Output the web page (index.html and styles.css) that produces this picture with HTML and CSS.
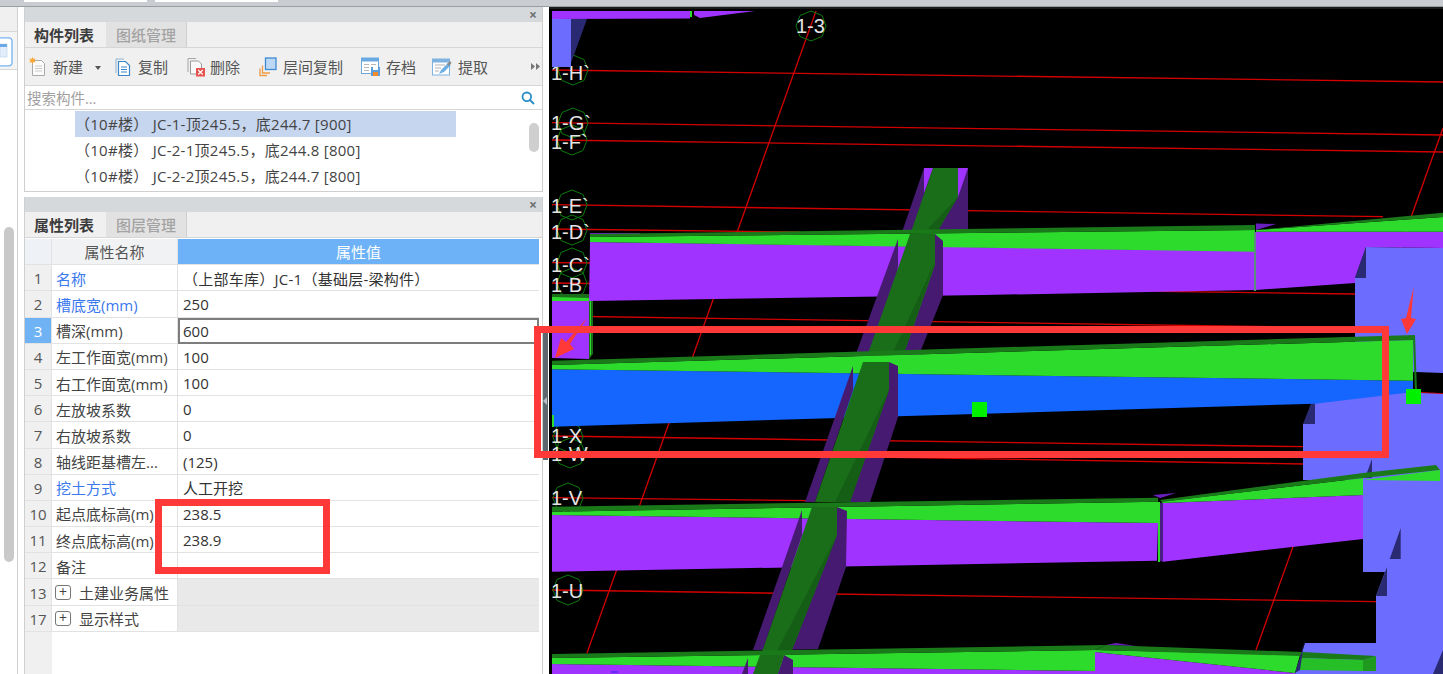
FILE: index.html
```html
<!DOCTYPE html>
<html lang="zh-CN">
<head>
<meta charset="utf-8">
<title>构件列表</title>
<link rel="stylesheet" href="styles.css">
</head>
<body>
<div class="top"><span class="top-tab"></span><span class="top-tab"></span></div>
<div class="main">
  <aside class="rail">
    <div class="rail-col">
      <div class="rail-head"></div>
      <div class="rail-icon">
        <svg class="rail-svg" width="13" height="30" viewBox="0 0 13 30"><path d="M-6 .8h15a3 3 0 0 1 3 3v22a3 3 0 0 1-3 3h-15" fill="#fff" stroke="#74b4f2" stroke-width="1.300"/><rect x="0" y="7" width="7" height="13" fill="#e4eefa" stroke="#a8cbee" stroke-width=".5"/><rect x="0" y="7" width="7" height="3" fill="#6aa9e6"/></svg>
      </div>
      <div class="rail-track"><div class="rail-thumb"></div></div>
    </div>
  </aside>

  <div class="panels">
    <section class="panel panel-list">
      <div class="panel-head"><span class="close">×</span></div>
      <div class="tabs">
        <span class="tab tab-on">构件列表</span>
        <span class="tab">图纸管理</span>
      </div>
      <div class="toolbar">
        <span class="tool tool-new">
          <svg width="18" height="20" viewBox="0 0 18 20"><path d="M3.500 3.500h9l3 3v12h-12z" fill="#fbfbfb" stroke="#a9a9a9"/><path d="M6 9h7M6 11.500h7M6 14h7" stroke="#c9c9c9"/><path d="M3.500 0l1 2 2.200-.6L5.500 3.500l1.200 2-2.300-.5-1 2-1-2-2.200.5 1.200-2L.2 1.400l2.300.6z" fill="#f6a735"/></svg>
          新建<i class="caret"></i>
        </span>
        <span class="tool tool-copy">
          <svg width="16" height="20" viewBox="0 0 16 20"><path d="M1 16V2h8" fill="none" stroke="#8fb2d6"/><path d="M3.500 4.500h7l4 4v10h-11z" fill="#fff" stroke="#3b87c9" stroke-width="1.200"/><path d="M6 10h6M6 12.500h6M6 15h6" stroke="#3b87c9"/></svg>
          复制
        </span>
        <span class="tool tool-del">
          <svg width="18" height="20" viewBox="0 0 18 20"><path d="M1 15V1.500h8" fill="none" stroke="#a5a5a5"/><path d="M3.500 4h8l3 3v10h-11z" fill="#fafafa" stroke="#9a9a9a"/><rect x="9" y="11" width="9" height="8.500" fill="#e8534f"/><path d="M11.200 13l4.500 4.500M15.700 13l-4.500 4.500" stroke="#fff" stroke-width="1.200"/></svg>
          删除
        </span>
        <span class="tool tool-layer">
          <svg width="18" height="20" viewBox="0 0 18 20"><path d="M1 11.500v7h7" fill="none" stroke="#f09a45" stroke-width="1.300"/><path d="M3.500 8.500v7.500h7.500" fill="none" stroke="#f09a45" stroke-width="1.300"/><rect x="6.500" y="1" width="10.500" height="11.500" fill="#bcd8f5" stroke="#3f8ad2" stroke-width="1.300"/></svg>
          层间复制
        </span>
        <span class="tool tool-save">
          <svg width="19" height="20" viewBox="0 0 19 20"><rect x=".5" y="1" width="17" height="15.500" fill="#fff" stroke="#6aa9e0"/><rect x=".5" y="1" width="17" height="3.500" fill="#6aa9e0"/><path d="M3 7.500h5M3 10.500h5M3 13.500h5M10 7.500h5" stroke="#b8b8b8"/><rect x="10" y="10" width="9" height="9" fill="#5a9fdc"/><rect x="12" y="15" width="5" height="4" fill="#f08a2c"/><rect x="12" y="10" width="5" height="3" fill="#fff"/></svg>
          存档
        </span>
        <span class="tool tool-pick">
          <svg width="20" height="20" viewBox="0 0 20 20"><rect x=".5" y="2" width="17" height="16" fill="#fff" stroke="#7fb2e0"/><rect x=".5" y="2" width="17" height="3.500" fill="#7fb2e0"/><path d="M3 8h10M3 11h6M3 14h4" stroke="#b0b0b0"/><path d="M7 17l2-4 7-7 3 2-7 7z" fill="#6fb0e4"/><path d="M15 7l3-3 1.500 2-3 3z" fill="#888"/></svg>
          提取
        </span>
        <svg class="more" width="9" height="7" viewBox="0 0 9 7"><path d="M0 0l4 3.500L0 7zM5 0l4 3.500L5 7z" fill="#777"/></svg>
      </div>
      <div class="search">
        <span class="search-hint">搜索构件...</span>
        <svg class="search-ico" width="14" height="14" viewBox="0 0 14 14"><circle cx="5.800" cy="5.800" r="4.300" fill="none" stroke="#2a8fc8" stroke-width="1.800"/><path d="M9 9l4 4" stroke="#2a8fc8" stroke-width="2"/></svg>
      </div>
      <div class="list">
        <div class="row row-on">（10#楼） JC-1-顶245.5，底244.7 [900]</div>
        <div class="row">（10#楼） JC-2-1顶245.5，底244.8 [800]</div>
        <div class="row">（10#楼） JC-2-2顶245.5，底244.7 [800]</div>
        <div class="list-thumb"></div>
      </div>
    </section>

    <section class="panel panel-props">
      <div class="panel-head"><span class="close">×</span></div>
      <div class="tabs">
        <span class="tab tab-on">属性列表</span>
        <span class="tab">图层管理</span>
      </div>
      <div class="grid">
        <div class="idx idx-corner"></div><div class="hname">属性名称</div><div class="hval">属性值</div>
        <div class="idx">1</div><div class="name link">名称</div><div class="val val-wide">（上部车库）JC-1（基础层-梁构件）</div>
        <div class="idx">2</div><div class="name link">槽底宽(mm)</div><div class="val">250</div>
        <div class="idx idx-on">3</div><div class="name">槽深(mm)</div><div class="val val-on">600</div>
        <div class="idx">4</div><div class="name">左工作面宽(mm)</div><div class="val">100</div>
        <div class="idx">5</div><div class="name">右工作面宽(mm)</div><div class="val">100</div>
        <div class="idx">6</div><div class="name">左放坡系数</div><div class="val">0</div>
        <div class="idx">7</div><div class="name">右放坡系数</div><div class="val">0</div>
        <div class="idx">8</div><div class="name">轴线距基槽左...</div><div class="val">(125)</div>
        <div class="idx">9</div><div class="name link">挖土方式</div><div class="val">人工开挖</div>
        <div class="idx">10</div><div class="name">起点底标高(m)</div><div class="val">238.5</div>
        <div class="idx">11</div><div class="name">终点底标高(m)</div><div class="val">238.9</div>
        <div class="idx">12</div><div class="name">备注</div><div class="val"></div>
        <div class="idx">13</div><div class="name name-group"><i class="plus">+</i>土建业务属性</div><div class="val val-group"></div>
        <div class="idx">17</div><div class="name name-group"><i class="plus">+</i>显示样式</div><div class="val val-group"></div>
      </div>
      <div class="rest"><div class="rest-idx"></div></div>
    </section>
  </div>

  <div class="split"><div class="grip"><i class="grip-arrow"></i></div></div>

  <svg class="canvas" viewBox="549 7 894 667" preserveAspectRatio="none">
    <defs>
      <polygon id="oct" points="0,-15 11,-10.500 15,0 11,10.500 0,15 -11,10.500 -15,0 -11,-10.500" fill="none" stroke="#0d7a0d" stroke-width="1"/>
      <clipPath id="view"><rect x="552" y="8" width="891" height="666"/></clipPath>
    </defs>
    <rect x="549" y="7" width="894" height="667" fill="#000"/>
    <rect x="549" y="7" width="894" height="2" fill="#1c1c1c"/>
    <g clip-path="url(#view)">
      <g class="axis">
        <path d="M552 70L1443 82"/>
        <path d="M552 122.700L1443 135"/>
        <path d="M552 140L1443 152"/>
        <path d="M552 204.700L1383 216.700"/>
        <path d="M552 229L800 232"/>
        <path d="M552 262.700L600 263"/>
        <path d="M552 283L1355 294"/>
        <path d="M552 316L1355 328"/>
        <path d="M552 436L1303 446.700"/>
        <path d="M552 452L1303 464"/>
        <path d="M1421 392.700L1443 394"/>
        <path d="M552 497.700L810 500.700"/>
        <path d="M552 590L1376 601.700"/>
        <path d="M816 11L587 653"/>
        <path d="M1443 128L1256 650"/>
      </g>
      <use href="#oct" x="811" y="26"/>
      <use href="#oct" x="573" y="70"/>
      <use href="#oct" x="573" y="123"/>
      <use href="#oct" x="572" y="140"/>
      <use href="#oct" x="572" y="205"/>
      <use href="#oct" x="572" y="230"/>
      <use href="#oct" x="572" y="263"/>
      <use href="#oct" x="572" y="283"/>
      <use href="#oct" x="568" y="437"/>
      <use href="#oct" x="570" y="453"/>
      <use href="#oct" x="568" y="498"/>
      <use href="#oct" x="568" y="590"/>
      <text class="ax" x="796" y="33">1-3</text>
      <text class="ax" x="551" y="80">1-H`</text>
      <text class="ax" x="551" y="130">1-G`</text>
      <text class="ax" x="551" y="149">1-F`</text>
      <text class="ax" x="551" y="213">1-E`</text>
      <text class="ax" x="551" y="239">1-D`</text>
      <text class="ax" x="551" y="272">1-C`</text>
      <text class="ax" x="551" y="292">1-B</text>
      <text class="ax" x="551" y="443">1-X</text>
      <text class="ax" x="551" y="461">1-W</text>
      <text class="ax" x="551" y="505">1-V</text>
      <text class="ax" x="551" y="598">1-U</text>

      <polygon class="pu" points="552,11 690,11 690,18.500 552,19"/>
      <rect x="690" y="11" width="2" height="6" fill="#2ddb2d"/>
      <polygon class="pu" points="694,11 755,11 700,18 694,15"/>
      <rect class="bl" x="552" y="19" width="19" height="48"/>
      <polygon class="tr" points="571,19 587,19 571,63"/>

      <polygon class="bl" points="1366,247 1443,248 1443,373 1416,372 1355,372 1355,278 1366,278"/>
      <polygon class="tr" points="1366,247 1366,278 1355,278"/>
      <polygon class="bl" points="1315,393 1421,393 1443,394 1443,674 1295,674 1305,643 1376,643 1376,596 1385,572 1363,572 1363,480 1303,480 1303,424 1315,424"/>
      <polygon class="tr" points="1315,393 1315,424 1303,424"/>
      <polygon class="tr" points="1372,459 1372,478 1365,478"/>
      <polygon class="tr" points="1400.700,528 1400.700,559 1389.700,559"/>
      <polygon class="tr" points="1387,567 1387,596 1376,596"/>
      <polygon class="tr" points="1443,650 1443,674 1433,674"/>

      <polygon class="dp" points="924,168 968,168 968,232 902,232"/>
      <polygon class="pu" points="924,168 933,168 924,193"/>
      <polygon class="pu" points="958,168 968,168 958,197"/>
      <polygon class="dg" points="933,168 958,168 958,197 937,232 911,232"/>
      <polygon class="dd" points="958,197 937,232 925,232"/>

      <polygon class="pu" points="552,298 589,300 589,359 552,358"/>
      <polygon class="br" points="552,296 589,297 589,301 552,301"/>
      <polygon class="dg" points="552,294 589,294 589,298 552,297"/>
      <polygon class="dg" points="589,296 593,296 593,354 589,359"/>
      <rect x="590" y="300" width="1" height="55" fill="#2ddb2d"/>

      <polygon points="590,233 640,233 640,235 590,236" fill="#6a20c0"/>
      <polygon class="pu" points="590,242 1255,251 1255,290 983,295 589,301"/>
      <polygon class="br" points="590,237 1255,230 1255,251.700 590,242"/>
      <polygon class="tg" points="590,234 1255,225 1255,230 590,237"/>
      <rect x="1254" y="232" width="2" height="59" fill="#5b8f7d"/>
      <polygon points="1256,223.500 1276,224 1256,230" fill="#6a20c0"/>
      <polygon class="pu" points="1256,231.700 1443,231.700 1443,248 1366,247 1355,278 1355,283 1256,290"/>
      <polygon class="tr" points="1366,247 1366,278 1355,278"/>
      <polygon class="br" points="1256,230 1443,217 1443,231.700 1256,231.700"/>
      <polygon class="tg" points="1256,230 1443,212.700 1443,217"/>

      <polygon class="dp" points="898,239 898,265 875,352 852,370 850,370"/>
      <polygon class="dp" points="943,241 943,295 915,365 880,365 935,234"/>
      <polygon class="dp" points="868,325 898,265 885,365 852,365"/>
      <polygon class="dg" points="910,234 935,234 935,265 900,365 864,365"/>
      <polygon class="dd" points="935,262 900,365 887,365"/>

      <polygon class="be" points="552,369.300 1413,380.700 1413,392 1315,403.700 552,426.700"/>
      <polygon class="br" points="552,365 1413,340 1413,380.700 552,369.300"/>
      <polygon class="tg" points="552,360.700 1414.700,335 1413,340 552,365"/>
      <polygon class="tg" points="1413,338 1415,335 1417,392 1415,392"/>
      <rect x="552" y="415" width="2" height="12" fill="#2ddb2d"/>

      <polygon class="dp" points="853,366 853,390 815,502 805,502"/>
      <polygon class="dp" points="898,366 898,417 870,502 835,502 889,362"/>
      <polygon class="dg" points="863,362 889,362 889,390 850,502 815,502"/>
      <polygon class="dd" points="889,390 850,502 835,502"/>

      <polygon class="pu" points="552,515 1158,523 1157,560.700 552,571.700"/>
      <polygon class="br" points="552,511.700 1158,501.700 1158,523 552,515"/>
      <polygon class="tg" points="552,506.700 1158,497.700 1158,501.700 552,511.700"/>
      <polygon points="1153,495 1176,493 1160,498" fill="#6a20c0"/>
      <rect x="1158" y="502" width="2" height="60" fill="#2ddb2d"/>
      <polygon points="1160,503 1163,503 1163,562 1160,561" fill="#4a1d84"/>
      <polygon class="pu" points="1163,503 1363,495 1363,539 1163,561.700"/>
      <polygon class="br" points="1161,501.700 1363,478 1363,495 1163,503"/>
      <polygon class="tg" points="1160,500 1363,473 1436,465 1440,470 1363,478 1162,502"/>
      <polygon class="br" points="1363,480 1440,470 1440,481 1363,480"/>

      <polygon class="dp" points="802,510 802,535 763,650 753,650"/>
      <polygon class="dp" points="847,511 846,567 818,649 780,650 837,507"/>
      <polygon class="dg" points="812,507 837,507 837,535 790,655 761,655"/>
      <polygon class="dd" points="837,535 790,655 775,655"/>

      <polygon class="pu" points="552,664 1095,671 1095,674 552,674"/>
      <polygon class="br" points="552,658 1095,650 1095,671 552,664"/>
      <polygon class="tg" points="552,654 1106,645 1095,650 552,658"/>
      <polygon points="1116,643 1136,646 1106,645" fill="#6a20c0"/>
      <polygon class="pu" points="1095,652 1295,673 1295,674 1095,674"/>
      <polygon class="br" points="1095,650 1300,655 1295,673 1095,652"/>
      <polygon class="tg" points="1106,645 1303,652 1300,656 1095,650"/>
      <polygon class="tg" points="1303,652 1376,656 1363,660 1300,658"/>
      <polygon points="1300,658 1363,660 1363,671 1300,670" fill="#27bf27"/>
      <polygon points="1363,660 1376,656 1376,671 1363,671" fill="#1f9a1f"/>
      <polygon class="tr" points="1304,643 1300,658 1295,673 1300,670"/>

      <polygon class="dp" points="748,658 748,674 742,674"/>
      <polygon class="dp" points="793,660 793,674 778,674 784,655"/>
      <polygon class="dg" points="760,655 784,655 778,674 753,674"/>
      <path d="M611 672h7" stroke="#2222ee" stroke-width="1"/>

      <rect x="972" y="402" width="15" height="15" fill="#00f000"/>
      <rect x="1406" y="389" width="15" height="15" fill="#00f000"/>

      <polygon class="mk" points="587,318 570,344 574,349 555,358 561,338 566,342"/>
      <polygon class="mk" points="1413.700,287 1411,318 1416,319 1407,334 1401,319 1406,318"/>
    </g>
  </svg>

  <div class="mark mark-beam"></div>
  <div class="mark mark-cells"></div>
</div>
</body>
</html>
```

FILE: styles.css
```css
* { box-sizing: border-box; }
html, body { margin: 0; height: 100%; }
body {
  position: relative;
  width: 1443px;
  height: 674px;
  overflow: hidden;
  background: #fff;
  font-family: "Open Sans", "Noto Sans CJK SC", sans-serif;
  font-size: 15px;
  color: #333;
}

.top {
  display: flex;
  gap: 8px;
  height: 7px;
  padding-left: 24px;
  background: #c9ccd1;
  border-bottom: 1px solid #9a9da1;
}
.top-tab { width: 123px; height: 2px; background: #fff; }

.main { display: flex; height: 667px; }

.rail { width: 24px; flex: none; background: #fff; }
.rail-col { width: 18px; height: 100%; border-right: 1px solid #d0d0d0; display: flex; flex-direction: column; }
.rail-head { height: 25px; background: #f0f0f0; border-bottom: 1px solid #d8d8d8; }
.rail-icon { height: 38px; background: #f4f4f4; border-bottom: 1px solid #d8d8d8; padding-top: 5px; }
.rail-svg { display: block; }
.rail-track { flex: 1; padding: 157px 3px 0 4px; }
.rail-thumb { width: 10px; height: 335px; background: #c9c9c9; border-radius: 5px; }

.panels { width: 519px; flex: none; display: flex; flex-direction: column; background: #fff; }
.panel { display: flex; flex-direction: column; border-left: 1px solid #cfcfcf; border-right: 1px solid #cfcfcf; }
.panel-list { height: 185px; border-bottom: 1px solid #cfcfcf; }
.panel-props { flex: 1; margin-top: 5px; min-height: 0; }

.panel-head {
  flex: none;
  height: 15px;
  background: #d6d9dc;
  display: flex;
  justify-content: flex-end;
  align-items: center;
  padding-right: 5px;
}
.close { font-size: 14px; line-height: 14px; color: #6e7174; font-weight: 700; }

.tabs {
  flex: none;
  height: 26px;
  display: flex;
  background: #f0f0f0;
  border-bottom: 1px solid #d6d6d6;
}
.tab {
  width: 81px;
  text-align: center;
  line-height: 27px;
  color: #a3a3a3;
  background: #e2e2e2;
  border-right: 1px solid #cfcfcf;
  font-weight: 500;
}
.tab-on { padding-right: 3px; color: #3c3c3c; background: #f0f0f0; border-right: none; font-weight: 700; }

.toolbar {
  flex: none;
  height: 38px;
  display: flex;
  align-items: center;
  background: #f0f0f0;
  border-bottom: 1px solid #d6d6d6;
  color: #555;
}
.tool { display: flex; align-items: center; gap: 7px; white-space: nowrap; }
.tool-new { margin-left: 4px; gap: 6px; }
.tool-del { margin-left: 19px; gap: 5px; }
.tool-layer { margin-left: 19px; gap: 6px; }
.tool-save { margin-left: 18px; gap: 6px; }
.tool-pick { margin-left: 16px; gap: 6px; }
.caret {
  width: 0; height: 0;
  margin: 2px 14px 0 6px;
  border-left: 3.500px solid transparent;
  border-right: 3.500px solid transparent;
  border-top: 4px solid #555;
}
.more { margin-left: auto; margin-right: 2px; }

.search {
  flex: none;
  height: 24px;
  display: flex;
  align-items: center;
  justify-content: space-between;
  padding: 0 7px 0 2px;
  background: #fff;
  border-bottom: 1px solid #d6d6d6;
}
.search-hint { color: #a0a0a0; font-size: 14.500px; }

.list { position: relative; flex: 1; padding: 1px 0 0 50px; background: #fff; color: #444; }
.row {
  width: 381px;
  height: 26px;
  line-height: 26px;
  white-space: nowrap;
  letter-spacing: .27px;
}
.row-on { background: #c6d6ef; }
.list-thumb {
  position: absolute;
  right: 3px;
  top: 13px;
  width: 10px;
  height: 29px;
  background: #cfcfcf;
  border-radius: 5px;
}

.grid {
  flex: none;
  display: grid;
  grid-template-columns: 27px 126px 361px;
  grid-auto-rows: 26.200px;
  margin-top: 1px;
}
.grid > div {
  display: flex;
  align-items: center;
  padding-top: 1px;
  border-bottom: 1px solid #e2e2e2;
  white-space: pre;
  overflow: hidden;
}
.idx { justify-content: center; background: #f0f0f0; color: #555; border-right: 1px solid #e2e2e2; }
.idx-corner { background: #eef2f7; }
.idx-on { background: #6fb3f5; color: #fff; }
.grid > .hname { justify-content: center; padding-top: 0; background: #f1f2f3; color: #555; border-right: 1px solid #e2e2e2; }
.grid > .hval { justify-content: center; padding-top: 0; background: #6db2f6; color: #fff; }
.name { padding-left: 4px; color: #444; border-right: 1px solid #e2e2e2; }
.link { color: #3a78ee; }
.val { padding-left: 5px; color: #333; background: #fff; }
.val-wide { letter-spacing: .25px; }
.grid > .val-on { border: 2px solid #7d7d7d; padding: 0 0 0 3px; }
.val-group { background: #e9e9e9; }
.name-group { padding-left: 3px; }
.plus {
  flex: none;
  width: 16px;
  height: 15px;
  margin-right: 8px;
  border: 1px solid #777;
  border-radius: 3px;
  font-style: normal;
  font-size: 14px;
  line-height: 12px;
  text-align: center;
}
.rest { flex: 1; background: #fff; }
.rest-idx { width: 27px; height: 100%; background: #f0f0f0; }

.split { width: 6px; flex: none; background: #fff; display: flex; align-items: flex-start; }
.grip {
  position: relative;
  width: 5px;
  height: 127px;
  margin-top: 326px;
  background: #5d6770;
}
.grip-arrow {
  position: absolute;
  left: 0;
  top: 64px;
  width: 0; height: 0;
  border-top: 4px solid transparent;
  border-bottom: 4px solid transparent;
  border-right: 4px solid #b8bec4;
}

.canvas { flex: 1; min-width: 0; height: 100%; display: block; }
.axis path { stroke: #d40000; stroke-width: 1.300; fill: none; }
.ax { font-family: "Liberation Sans", sans-serif; font-size: 20px; fill: #e4e4e4; }
.pu { fill: #a033ff; }
.bl { fill: #6c6cff; }
.tr { fill: #2a2a72; }
.br { fill: #2ddb2d; }
.tg { fill: #1a7a1a; }
.dg { fill: #1a6e1a; }
.dd { fill: #155e15; }
.dp { fill: #451a70; }
.be { fill: #1565ff; }
.mk { fill: #ff3838; }

.mark { position: absolute; border: 7px solid #ff3838; pointer-events: none; }
.mark-beam { left: 534px; top: 326px; width: 855px; height: 132px; }
.mark-cells { left: 155px; top: 499px; width: 175px; height: 75px; }
```
